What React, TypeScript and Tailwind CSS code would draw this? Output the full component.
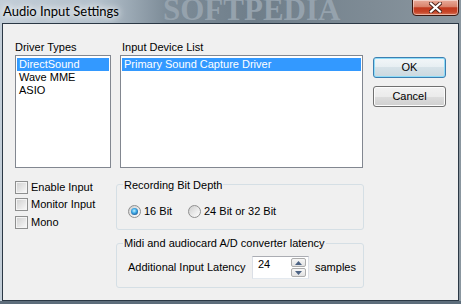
import React from "react";

const Check = ({ label, className = "" }: { label: string; className?: string }) => (
  <div className={"flex items-center h-[13px] " + className}>
    <div className="w-[13px] h-[13px] shrink-0 border border-[#8e8f8f] bg-[linear-gradient(135deg,#cfcfcf_0%,#e6e6e6_55%,#fbfbfb_100%)] shadow-[inset_0_0_0_1px_#f4f4f4]" />
    <span className="ml-[3px] whitespace-nowrap">{label}</span>
  </div>
);

const Radio = ({ checked }: { checked?: boolean }) => (
  <div className="w-[13px] h-[13px] shrink-0 rounded-full border border-[#8f8f8f] bg-[linear-gradient(135deg,#cdcdcd_0%,#eaeaea_55%,#fdfdfd_100%)] flex items-center justify-center">
    {checked && (
      <div className="w-[7px] h-[7px] rounded-full bg-[radial-gradient(circle_at_45%_40%,#c4f1ff_0%,#3eaae6_40%,#1d5f9e_75%,#173e6b_100%)]" />
    )}
  </div>
);

const Arrow = ({ up }: { up?: boolean }) => (
  <svg width="7" height="4" viewBox="0 0 7 4">
    {up ? <path d="M0 4 L3.5 0 L7 4 Z" fill="#4c6384" /> : <path d="M0 0 L3.5 4 L7 0 Z" fill="#4c6384" />}
  </svg>
);

export default function App() {
  return (
    <div className="w-[461px] h-[304px] overflow-hidden relative flex flex-col bg-[linear-gradient(90deg,#c3ced8_0%,#b2bfca_22%,#7d8c98_36%,#6f7e8a_55%,#7e8b95_80%,#8b97a0_100%)]">
      {/* Title bar */}
      <div className="relative h-[23px] shrink-0 flex items-start">
        <span className="absolute left-[163px] top-[-6px] font-['Liberation_Serif',serif] font-bold text-[31px] leading-none text-[#95a2ad] whitespace-nowrap">
          SOFTPEDIA
        </span>
        <span className="relative pl-[3px] pt-[3px] text-[13px] leading-[16px] font-['Lato',sans-serif] text-black whitespace-nowrap [text-shadow:0_0_6px_#ffffff,0_0_10px_#ffffff]">
          Audio Input Settings
        </span>
        <div className="relative ml-auto mr-[2px] mt-[-1px] w-[47px] h-[17px] rounded-b-[4px] border border-[#3b1810] bg-[linear-gradient(180deg,#e9ab9a_0%,#d9826b_45%,#c1381d_52%,#c64528_80%,#dc7a5e_100%)] shadow-[inset_0_0_0_1px_rgba(255,255,255,0.45)] flex items-center justify-center">
          <svg width="13" height="11" viewBox="0 0 13 11" className="mt-[-1px]">
            <path d="M2 1.5 L11 9.5 M11 1.5 L2 9.5" stroke="#4a2118" strokeWidth="4" strokeLinecap="square" />
            <path d="M2 1.5 L11 9.5 M11 1.5 L2 9.5" stroke="#ffffff" strokeWidth="2.2" strokeLinecap="square" />
          </svg>
        </div>
      </div>

      {/* Client area */}
      <div className="mx-[2px] h-[278px] shrink-0 border border-[#2b3845] bg-[#f0f0f0] relative font-['Liberation_Sans',Arial,sans-serif] text-[11px] leading-[13px] text-black">
        {/* Top row */}
        <div className="flex pl-[12px] pt-[17px]">
          <div className="w-[96px] flex flex-col">
            <div className="h-[14px] whitespace-nowrap">Driver Types</div>
            <div className="h-[113px] border border-[#828790] bg-white px-[1px] pt-[2px]">
              <div className="h-[13px] bg-[#3399ff] text-white pl-[2px] whitespace-nowrap">DirectSound</div>
              <div className="h-[13px] pl-[2px] whitespace-nowrap">Wave MME</div>
              <div className="h-[13px] pl-[2px] whitespace-nowrap">ASIO</div>
            </div>
          </div>
          <div className="ml-[9px] w-[243px] flex flex-col">
            <div className="h-[14px] pl-[2px] whitespace-nowrap">Input Device List</div>
            <div className="h-[113px] border border-[#828790] bg-white px-[1px] pt-[2px]">
              <div className="h-[13px] bg-[#3399ff] text-white pl-[2px] whitespace-nowrap">Primary Sound Capture Driver</div>
            </div>
          </div>
          <div className="ml-[10px] w-[73px] flex flex-col pt-[16px]">
            <button className="h-[21px] w-[73px] rounded-[3px] border border-[#3c7fb1] bg-[linear-gradient(180deg,#f2f6f8_0%,#e6eef2_50%,#d6e2e8_50%,#cbd8df_100%)] shadow-[inset_0_0_0_1px_#8fdcf8] leading-[13px]">
              OK
            </button>
            <button className="mt-[8px] h-[21px] w-[73px] rounded-[3px] border border-[#707070] bg-[linear-gradient(180deg,#f2f2f2_0%,#ebebeb_50%,#dddddd_50%,#cfcfcf_100%)] shadow-[inset_0_0_0_1px_#fcfcfc] leading-[13px]">
              Cancel
            </button>
          </div>
        </div>

        {/* Bottom row */}
        <div className="flex pl-[12px] mt-[12px]">
          <div className="w-[101px] flex flex-col pt-[1px]">
            <Check label="Enable Input" />
            <Check label="Monitor Input" className="mt-[4px]" />
            <Check label="Mono" className="mt-[5px]" />
          </div>
          <div className="w-[248px] flex flex-col">
            <div className="relative mt-[4px] h-[46px] border border-[#d5dfe5] rounded-[3px]">
              <span className="absolute left-[6px] top-[-6px] px-[1px] bg-[#f0f0f0] whitespace-nowrap">Recording Bit Depth</span>
              <div className="flex items-center pl-[11px] pt-[20px]">
                <div className="w-[60px] flex items-center">
                  <Radio checked />
                  <span className="ml-[3px] whitespace-nowrap">16 Bit</span>
                </div>
                <Radio />
                <span className="ml-[3px] whitespace-nowrap">24 Bit or 32 Bit</span>
              </div>
            </div>
            <div className="relative mt-[13px] h-[45px] border border-[#d5dfe5] rounded-[3px]">
              <span className="absolute left-[6px] top-[-7px] px-[1px] bg-[#f0f0f0] whitespace-nowrap">Midi and audiocard A/D converter latency</span>
              <div className="flex items-center pl-[11px] pt-[12px]">
                <div className="w-[124px] whitespace-nowrap">Additional Input Latency</div>
                <div className="relative w-[57px] h-[23px] border border-[#abadb3] border-l-[#dbdfe6] border-r-[#dbdfe6] border-b-[#e3e9ef] bg-white pl-[5px] pt-[1px]">
                  24
                  <div className="absolute right-[2px] top-[1px] bottom-[1px] w-[15px] flex flex-col gap-[1px]">
                    <div className="flex-1 rounded-[2px] border border-[#acacac] bg-[linear-gradient(180deg,#f7f7f7,#e2e2e2)] flex items-center justify-center">
                      <Arrow up />
                    </div>
                    <div className="flex-1 rounded-[2px] border border-[#acacac] bg-[linear-gradient(180deg,#f7f7f7,#e2e2e2)] flex items-center justify-center">
                      <Arrow />
                    </div>
                  </div>
                </div>
                <span className="ml-[6px] whitespace-nowrap">samples</span>
              </div>
            </div>
          </div>
        </div>
      </div>
      <div className="flex-1 bg-[#5d6d7b]" />
    </div>
  );
}
